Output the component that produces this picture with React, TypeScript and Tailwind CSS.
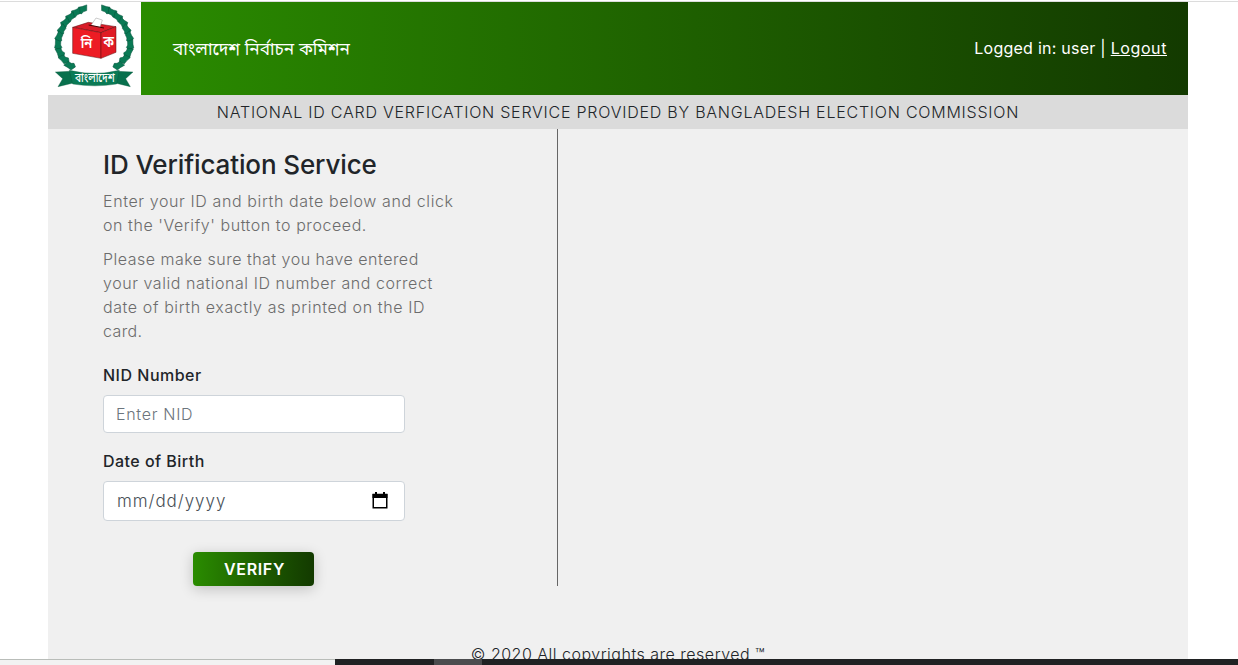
const font =
  "font-['Inter','Noto_Sans_Bengali','Noto_Sans',sans-serif] font-light";

const leaves = [
  [127, 28, -20],
  [107, 38, -26],
  [90, 52, -34],
  [75, 69, -42],
  [65, 89, -54],
  [57, 111, -66],
  [54, 135, -88],
  [60, 158, -118],
  [72, 178, -138],
  [90, 197, -150],
];

function Wreath() {
  return (
    <g fill="#0a7a55" stroke="#06543b" strokeWidth="1.5">
      {leaves.map(([x, y, r], i) => (
        <path
          key={i}
          d="M-16 5L-9-10L2-8L17-8L11 8L0 8L-7 12Z"
          transform={`translate(${x} ${y}) rotate(${r})`}
        />
      ))}
    </g>
  );
}

function Logo() {
  return (
    <svg viewBox="24 6 279 279" className="h-[93px] w-[93px] shrink-0 bg-white">
      <Wreath />
      <g transform="translate(325 0) scale(-1 1)">
        <Wreath />
      </g>
      <g stroke="#5a1010" strokeWidth="1.5" strokeLinejoin="round">
        <path d="M98 82L145 67L228 80L183 98Z" fill="#d91c28" />
        <path d="M98 82L183 98V175L98 160Z" fill="#ed1c24" />
        <path d="M183 98L228 80V157L183 175Z" fill="#e01b24" />
        <path d="M153 76L168 54L187 60L180 82Z" fill="#fff" stroke="#999" />
      </g>
      <path d="M146 75L192 84" stroke="#400" strokeWidth="3" />
      <g fill="#fff" className="font-['Noto_Sans_Bengali','Noto_Sans',sans-serif] font-semibold">
        <text x="122" y="144" fontSize="44" textLength="35" lengthAdjust="spacingAndGlyphs">
          নি
        </text>
        <text x="190" y="142" fontSize="46" textLength="32" lengthAdjust="spacingAndGlyphs">
          ক
        </text>
      </g>
      <path
        d="M46 216L91 214L100 249L54 260L68 236ZM279 216L234 214L225 249L271 260L257 236Z"
        fill="#08704d"
        stroke="#06543b"
      />
      <path
        d="M88 211Q164 229 238 211L230 252Q164 263 98 252Z"
        fill="#0a7a55"
        stroke="#06543b"
      />
      <text
        x="105"
        y="247"
        fontSize="36"
        fill="#fff"
        textLength="119"
        lengthAdjust="spacingAndGlyphs"
        className="font-['Noto_Sans_Bengali','Noto_Sans',sans-serif] font-medium"
      >
        বাংলাদেশ
      </text>
    </svg>
  );
}

function CalendarIcon() {
  return (
    <svg viewBox="0 0 16 17" className="h-[17px] w-4" fill="none">
      <path d="M1.25 2.5h13.5v13.2h-13.5z" stroke="#000" strokeWidth="1.5" />
      <path d="M.5 2h15v4H.5zM3 0h2v3H3zM11 0h2v3h-2z" fill="#000" />
    </svg>
  );
}

export default function App() {
  return (
    <div className={`${font} flex h-[665px] w-[1238px] flex-col overflow-hidden bg-white text-base leading-6 text-[#212529]`}>
      <div className="mt-px h-px shrink-0 bg-[#dcdcdc]" />
      <div className="ml-12 flex min-h-0 w-[1140px] flex-1 flex-col bg-[#f0f0f0]">
        <header className="flex h-[93px] shrink-0">
          <Logo />
          <div className="flex flex-1 items-center justify-between bg-linear-to-r from-[#2a8c00] to-[#133a00] pr-[21px] pl-8 font-normal text-white">
            <span className="text-[17.2px] whitespace-nowrap">বাংলাদেশ নির্বাচন কমিশন</span>
            <span className="pb-0.5 whitespace-nowrap tracking-[0.25px]">
              Logged in: user | <a className="tracking-[0.6px] underline">Logout</a>
            </span>
          </div>
        </header>
        <div className="flex h-[34px] shrink-0 items-center justify-center bg-[#dbdbdb] whitespace-nowrap">
          <span className="tracking-[0.77px]">NATIONAL ID CARD VERFICATION SERVICE PROVIDED BY BANGLADESH ELECTION COMMISSION</span>
        </div>
        <main className="flex h-[457px] shrink-0">
          <section className="w-[510px] border-r border-[#666] pl-[55px] whitespace-nowrap">
            <h1 className="mt-[19px] text-[26px] leading-[34px] font-medium tracking-[-0.12px]">
              ID Verification Service
            </h1>
            <p className="mt-[7px] text-[#6c6c6c]">
              <span className="block tracking-[0.61px]">Enter your ID and birth date below and click</span>
              <span className="block tracking-[0.56px]">on the 'Verify' button to proceed.</span>
            </p>
            <p className="mt-2.5 text-[#6c6c6c]">
              <span className="block tracking-[0.49px]">Please make sure that you have entered</span>
              <span className="block tracking-[0.56px]">your valid national ID number and correct</span>
              <span className="block tracking-[0.6px]">date of birth exactly as printed on the ID</span>
              <span className="block tracking-[0.4px]">card.</span>
            </p>
            <label className="mt-5 block font-medium tracking-[0.5px]">NID Number</label>
            <div className="mt-2 flex h-[38px] w-[302px] items-center rounded border border-[#ced4da] bg-white px-3 text-[#6c757d]">
              <span className="tracking-[0.7px]">Enter NID</span>
            </div>
            <label className="mt-4 block font-medium tracking-[0.47px]">Date of Birth</label>
            <div className="mt-2 flex h-10 w-[302px] items-center justify-between rounded border border-[#ced4da] bg-white pr-4 pl-[13px] text-[#495057]">
              <span className="text-[17px] tracking-[0.95px]">mm/dd/yyyy</span>
              <span className="pb-0.5">
                <CalendarIcon />
              </span>
            </div>
            <button className="mt-[31px] ml-[90px] flex h-[34px] w-[121px] items-center justify-center rounded bg-linear-to-r from-[#2a8c00] to-[#133a00] pl-0.5 font-semibold tracking-[0.65px] text-white shadow-[0_3px_14px_rgba(0,0,0,0.2)]">
              VERIFY
            </button>
          </section>
        </main>
        <footer className="mt-14 flex justify-center whitespace-nowrap">
          <span className="tracking-[0.5px]">© 2020 All copyrights are reserved ™</span>
        </footer>
      </div>
      <div className="relative z-10 flex h-1.5 shrink-0 bg-[#202223]">
        <div className="w-[335px] border-t border-[#b9bdb9] bg-[#f2f2f2]" />
        <div className="w-[99px]" />
        <div className="w-12 bg-[#4b4c4e]" />
      </div>
    </div>
  );
}
